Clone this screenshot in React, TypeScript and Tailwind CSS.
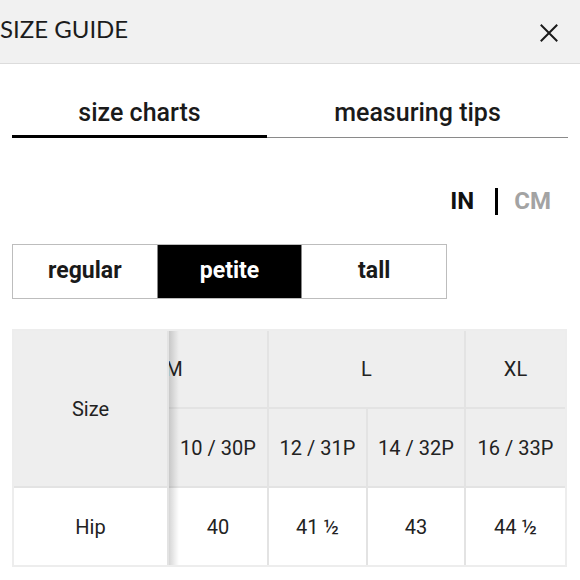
import React from "react";

const roboto = { fontFamily: "Roboto, 'Liberation Sans', sans-serif" };

export default function App() {
  return (
    <div className="w-[580px] h-[580px] bg-white overflow-hidden text-[#1a1a1a]" style={roboto}>
      {/* Header */}
      <div className="h-[64px] bg-[#f1f1f1] border-b border-[#dcdcdc] flex items-center justify-between pr-[22px]">
        <div className="text-[24px] leading-none text-[#1c1c1c] -mt-[5px]" style={{ fontFamily: "Lato, 'Open Sans', sans-serif" }}>
          SIZE GUIDE
        </div>
        <svg width="18" height="18" viewBox="0 0 18 18" className="mt-[2px]">
          <path d="M1.5 1.5 L16.5 16.5 M16.5 1.5 L1.5 16.5" stroke="#1a1a1a" strokeWidth="2" strokeLinecap="square" />
        </svg>
      </div>

      {/* Tabs */}
      <div className="mx-[12px] mt-[33px] flex items-end">
        <div className="w-[255px] text-center text-[25px] font-medium leading-[30px] pb-[7px] pt-[1px] border-b-[3px] border-black">
          size charts
        </div>
        <div className="flex-1 text-center text-[25px] font-medium leading-[30px] pb-[9px] pt-[1px] border-b border-[#8a8a8a]">
          measuring tips
        </div>
      </div>

      {/* Units */}
      <div className="mt-[48px] flex justify-end items-center pr-[29px] h-[30px] text-[24px] font-bold">
        <span className="text-[#111]">IN</span>
        <span className="ml-[21px] w-[3px] h-[27px] bg-black" />
        <span className="ml-[16px] text-[#a3a3a3]">CM</span>
      </div>

      {/* Fit buttons */}
      <div className="mt-[28px] ml-[12px] flex w-[435px] h-[55px] border border-[#bdbdbd] text-[23px] font-bold">
        <div className="flex-1 flex items-center justify-center">regular</div>
        <div className="flex-1 flex items-center justify-center bg-black text-white border-x border-[#888]">petite</div>
        <div className="flex-1 flex items-center justify-center">tall</div>
      </div>

      {/* Table */}
      <div className="mt-[30px] ml-[12px] w-[555px] h-[238px] border-2 border-[#ededed] bg-[#e3e3e3] flex gap-[2px] text-[20px] text-[#222] relative">
        <div className="w-[153px] flex flex-col gap-[2px]">
          <div className="h-[155px] bg-[#eeeeee] flex items-center justify-center">Size</div>
          <div className="flex-1 bg-white flex items-center justify-center">Hip</div>
        </div>
        <div className="flex-1 overflow-hidden relative">
          <div className="-ml-[88px] grid grid-cols-[86px_98px_97px_96px_99px] grid-rows-[76px_77px_77px] gap-[2px] bg-[#e3e3e3]">
            <div className="col-span-2 bg-[#eeeeee] flex items-center justify-center">M</div>
            <div className="col-span-2 bg-[#eeeeee] flex items-center justify-center">L</div>
            <div className="bg-[#eeeeee] flex items-center justify-center">XL</div>

            <div className="bg-[#eeeeee]" />
            <div className="bg-[#eeeeee] flex items-center justify-center">10 / 30P</div>
            <div className="bg-[#eeeeee] flex items-center justify-center">12 / 31P</div>
            <div className="bg-[#eeeeee] flex items-center justify-center">14 / 32P</div>
            <div className="bg-[#eeeeee] flex items-center justify-center">16 / 33P</div>

            <div className="bg-white" />
            <div className="bg-white flex items-center justify-center">40</div>
            <div className="bg-white flex items-center justify-center">41 ½</div>
            <div className="bg-white flex items-center justify-center">43</div>
            <div className="bg-white flex items-center justify-center">44 ½</div>
          </div>
          <div className="absolute left-0 top-0 bottom-0 w-[10px] bg-gradient-to-r from-[rgba(0,0,0,0.16)] to-transparent" />
        </div>
      </div>
    </div>
  );
}
